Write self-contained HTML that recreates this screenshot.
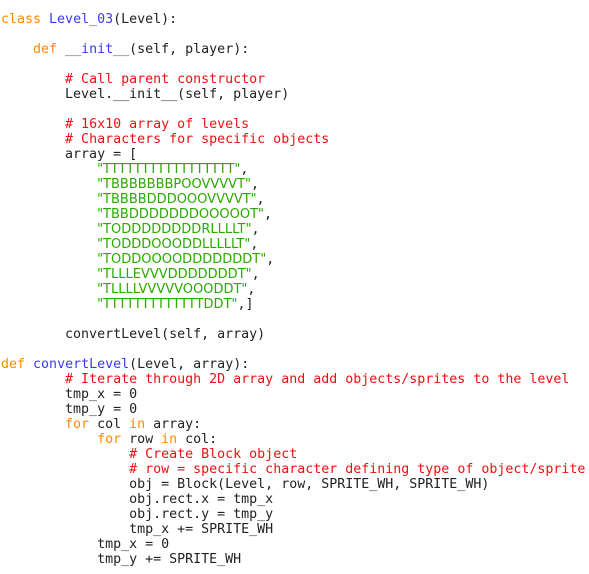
<!DOCTYPE html>
<html><head><meta charset="utf-8"><style>
html,body{margin:0;padding:0;background:#fff;width:589px;height:574px;overflow:hidden}
pre{margin:0;padding:12px 0 0 1px;font-family:"DejaVu Sans Mono","Liberation Mono",monospace;font-size:13.3px;line-height:15px;color:#222}
.k{color:#ff8a00}.f{color:#3a3af0}.c{color:#f01010}.s{color:#2aaa00;font-family:"DejaVu Sans",sans-serif;font-size:13px;line-height:1px}
</style></head><body><pre><span class="k">class</span> <span class="f">Level_03</span>(Level):

    <span class="k">def</span> <span class="f">__init__</span>(self, player):

        <span class="c"># Call parent constructor</span>
        Level.__init__(self, player)

        <span class="c"># 16x10 array of levels</span>
        <span class="c"># Characters for specific objects</span>
        array = [
            <span class="s">"TTTTTTTTTTTTTTTTT"</span>,
            <span class="s">"TBBBBBBBPOOVVVVT"</span>,
            <span class="s">"TBBBBDDDOOOVVVVT"</span>,
            <span class="s">"TBBDDDDDDDOOOOOT"</span>,
            <span class="s">"TODDDDDDDDRLLLLT"</span>,
            <span class="s">"TODDDOOODDLLLLLT"</span>,
            <span class="s">"TODDOOOODDDDDDDT"</span>,
            <span class="s">"TLLLEVVVDDDDDDDT"</span>,
            <span class="s">"TLLLLVVVVVOOODDT"</span>,
            <span class="s">"TTTTTTTTTTTTTDDT"</span>,]

        convertLevel(self, array)

<span class="k">def</span> <span class="f">convertLevel</span>(Level, array):
        <span class="c"># Iterate through 2D array and add objects/sprites to the level</span>
        tmp_x = 0
        tmp_y = 0
        <span class="k">for</span> col <span class="k">in</span> array:
            <span class="k">for</span> row <span class="k">in</span> col:
                <span class="c"># Create Block object</span>
                <span class="c"># row = specific character defining type of object/sprite</span>
                obj = Block(Level, row, SPRITE_WH, SPRITE_WH)
                obj.rect.x = tmp_x
                obj.rect.y = tmp_y
                tmp_x += SPRITE_WH
            tmp_x = 0
            tmp_y += SPRITE_WH
</pre></body></html>
